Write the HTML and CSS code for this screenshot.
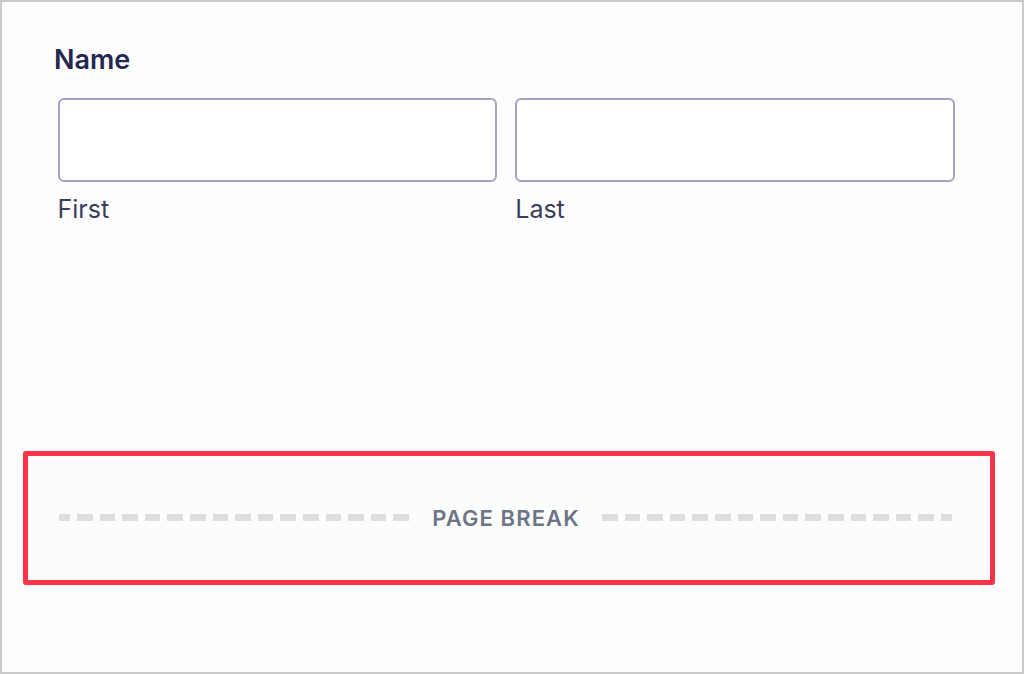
FILE: index.html
```html
<!DOCTYPE html>
<html>
<head>
    <title>Form Editor - Page Break</title>
    <link rel="stylesheet" href="styles.css">
</head>
<body>
<div class="frame">
    <div class="field">
        <label class="field-label">Name</label>
        <div class="inputs">
            <div class="input-col">
                <input class="text-input" type="text">
                <span class="sub-label">First</span>
            </div>
            <div class="input-col">
                <input class="text-input" type="text">
                <span class="sub-label">Last</span>
            </div>
        </div>
    </div>
    <div class="page-break">
        <div class="break-guide"></div>
        <div class="break-row">
            <span class="break-line break-line-left"></span>
            <span class="break-text">PAGE BREAK</span>
            <span class="break-line break-line-right"></span>
        </div>
    </div>
</div>
</body>
</html>
```

FILE: styles.css
```css
html, body {
    margin: 0;
    padding: 0;
    background: #fdfdfd;
}
.frame {
    box-sizing: border-box;
    width: 1024px;
    height: 674px;
    border: 2px solid #cacaca;
    background: #fdfdfd;
    padding-top: 42px;
    font-family: Inter, "Noto Sans", sans-serif;
}
.field {
    padding: 0 67px 0 55px;
}
.field-label {
    display: block;
    margin-left: -3px;
    font-size: 27px;
    line-height: 32px;
    font-weight: 600;
    color: #242850;
}
.inputs {
    display: grid;
    grid-template-columns: 1fr 1fr;
    column-gap: 18px;
    margin-top: 22px;
    padding-left: 0.5px;
}
.input-col {
    display: flex;
    flex-direction: column;
}
.text-input {
    box-sizing: border-box;
    height: 84px;
    margin: 0;
    border: 2px solid #a2a3c6;
    border-radius: 6px;
    background: #fff;
    outline: none;
}
.sub-label {
    margin-top: 12px;
    font-size: 25px;
    line-height: 30px;
    color: #3b3e5c;
}
.page-break {
    display: flex;
    flex-direction: column;
    box-sizing: border-box;
    height: 134px;
    margin: 227px 27px 0 21px;
    border: 5px solid #f9344a;
    border-radius: 3px;
    background: #fcfcfc;
}
.break-guide {
    margin: 6px 7px 0 5px;
    border-top: 1px dotted #ececec;
}
.break-row {
    flex: 1;
    display: flex;
    align-items: center;
    padding: 0 38px 8px 31px;
}
.break-line {
    flex: 1;
    height: 7px;
}
.break-line-left {
    background: repeating-linear-gradient(to left, #dedede 0, #dedede 15.6px, transparent 15.6px, transparent 22.6px);
}
.break-line-right {
    background: repeating-linear-gradient(to right, #dedede 0, #dedede 15.6px, transparent 15.6px, transparent 22.6px);
}
.break-text {
    margin: 0 22px 0 23px;
    font-size: 22px;
    line-height: 24px;
    font-weight: 600;
    letter-spacing: 1.1px;
    color: #6e7586;
}
```
